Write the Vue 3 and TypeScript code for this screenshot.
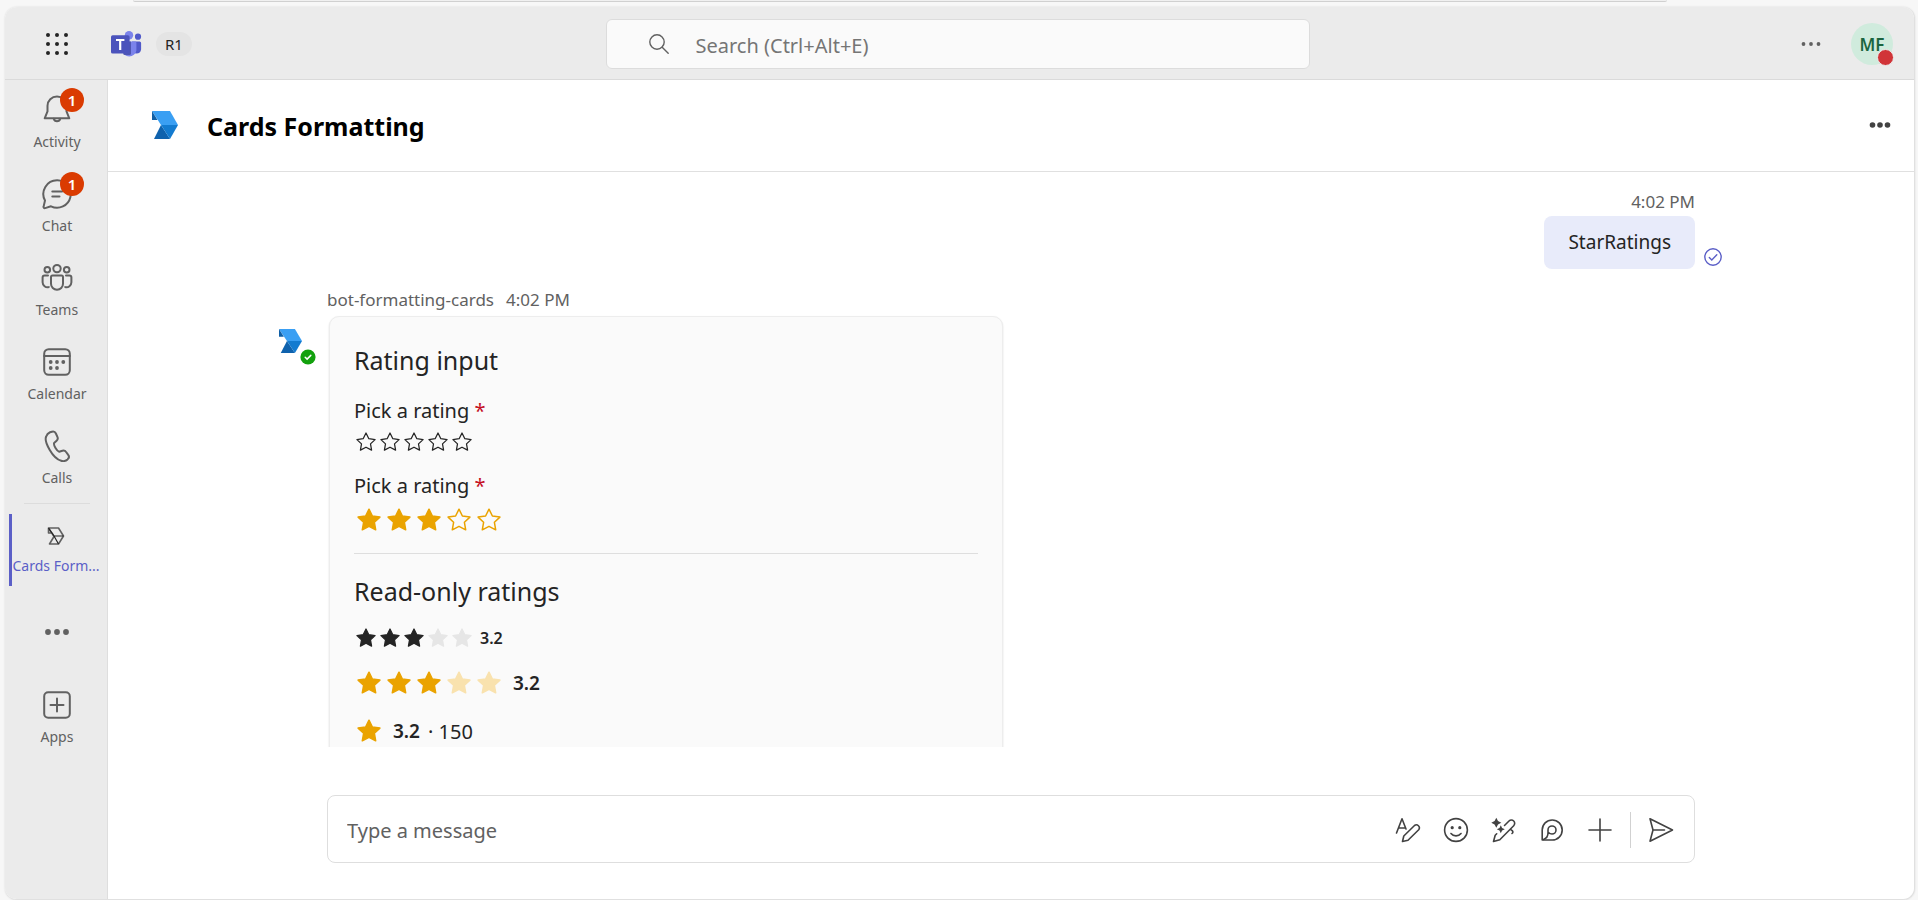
<script setup lang="ts">
import { ref } from 'vue'

interface NavItem {
  label: string
  icon: 'bell' | 'chat' | 'people' | 'calendar' | 'phone'
  badge?: number
}

const navItems: NavItem[] = [
  { label: 'Activity', icon: 'bell', badge: 1 },
  { label: 'Chat', icon: 'chat', badge: 1 },
  { label: 'Teams', icon: 'people' },
  { label: 'Calendar', icon: 'calendar' },
  { label: 'Calls', icon: 'phone' },
]

const starPath =
  'M12 1.2 15.4 8 22.9 9.1 17.4 14.300 18.700 21.800 12 18.300 5.300 21.800 6.600 14.300 1.100 9.100 8.600 8Z'

const gridSteps = [3, 12, 21]
const search = ref('')
const draft = ref('')
const firstRating = ref(0)
const secondRating = ref(3)
</script>

<template>
  <div class="page">
    <div class="upper-edge"></div>
    <div class="window">
      <header class="topbar">
        <div class="topbar-left">
          <button class="plain launcher" aria-label="App launcher">
            <svg width="24" height="24" viewBox="0 0 24 24" fill="#242424">
              <template v-for="y in gridSteps" :key="y">
                <circle v-for="x in gridSteps" :key="x" :cx="x" :cy="y" r="2" />
              </template>
            </svg>
          </button>
          <svg class="teams-logo" width="31" height="27" viewBox="0 0 31 27">
            <circle cx="27" cy="5.7" r="3.1" fill="#5059c9" />
            <path d="M21 10.4h7.6a1.5 1.5 0 0 1 1.5 1.5v6.6a4.6 4.6 0 0 1-9.1 0Z" fill="#5059c9" />
            <circle cx="18" cy="4.3" r="4.2" fill="#7b83eb" />
            <path d="M11 10.4h13a1.4 1.4 0 0 1 1.4 1.4v7.6a7.3 7.3 0 0 1-14.4 0Z" fill="#7b83eb" />
            <path d="M11 10.4h9v12a1.6 1.6 0 0 1-1.6 1.6H12.6Z" fill="#3f479f" opacity=".75" />
            <rect y="4.3" width="18.6" height="18.3" rx="1.7" fill="#4b53bc" />
            <path d="M5 9h8.400M9.200 9v10" fill="none" stroke="#fff" stroke-width="2.200" />
          </svg>
          <span class="ring">R1</span>
        </div>
        <label class="search">
          <svg width="22" height="22" viewBox="0 0 22 22" fill="none" stroke="#616161" stroke-width="1.4" stroke-linecap="round">
            <circle cx="9" cy="9" r="7.2" />
            <path d="m14.200 14.200 6 6" />
          </svg>
          <input v-model="search" type="text" placeholder="Search (Ctrl+Alt+E)" aria-label="Search" />
        </label>
        <div class="topbar-right">
          <button class="plain" aria-label="Settings and more">
            <svg width="20" height="20" viewBox="0 0 20 20" fill="#616161">
              <circle cx="2.500" cy="10" r="1.900" />
              <circle cx="10" cy="10" r="1.900" />
              <circle cx="17.500" cy="10" r="1.900" />
            </svg>
          </button>
          <button class="plain avatar" aria-label="Profile, MF, busy">MF<span class="busy"></span></button>
        </div>
      </header>

      <div class="body">
        <nav class="rail">
          <button v-for="item in navItems" :key="item.label" class="plain rail-item">
            <span class="rail-icon">
              <svg v-if="item.icon === 'bell'" width="32" height="32" viewBox="0 0 32 32" class="line">
                <path d="M16 2.500c-5.300 0-9.500 4.100-9.500 9.300v5.600L3.700 24.300h24.600l-2.800-6.900v-5.600c0-5.200-4.200-9.300-9.500-9.300Z" />
                <path d="M12.800 24.800a3.300 3.300 0 0 0 6.400 0" />
              </svg>
              <svg v-else-if="item.icon === 'chat'" width="32" height="32" viewBox="0 0 32 32" class="line">
                <path d="M16.200 2.300a13.700 13.700 0 1 1-6.200 26l-5.900 1.800c-1 .3-1.800-.6-1.500-1.500L4 22.500a13.700 13.700 0 0 1 12.200-20.200Z" />
                <path d="M11.300 13.500h9.800M11.300 18.600h7.200" />
              </svg>
              <svg v-else-if="item.icon === 'people'" width="32" height="32" viewBox="0 0 32 32" class="line">
                <circle cx="16" cy="6.600" r="3.700" />
                <circle cx="6.300" cy="7.800" r="2.800" />
                <circle cx="25.700" cy="7.800" r="2.800" />
                <path d="M11.500 13.500h9a1.500 1.500 0 0 1 1.500 1.500v6.800a6 6 0 0 1-12 0V15a1.500 1.500 0 0 1 1.500-1.500Z" />
                <path d="M7 13.500H3.600a2 2 0 0 0-2 2v4.800a5 5 0 0 0 6.200 4.800M25 13.500h3.400a2 2 0 0 1 2 2v4.800a5 5 0 0 1-6.200 4.800" />
              </svg>
              <svg v-else-if="item.icon === 'calendar'" width="32" height="32" viewBox="0 0 32 32" class="line">
                <rect x="3.200" y="3.200" width="25.600" height="25.600" rx="4.500" />
                <path d="M3.200 10h25.600" />
                <g fill="#616161" stroke="none">
                  <circle cx="9.700" cy="16" r="1.900" />
                  <circle cx="16" cy="16" r="1.900" />
                  <circle cx="22.300" cy="16" r="1.900" />
                  <circle cx="9.700" cy="22" r="1.900" />
                  <circle cx="16" cy="22" r="1.900" />
                </g>
              </svg>
              <svg v-else width="32" height="32" viewBox="0 0 32 32" class="line">
                <path d="m9 2.300 1.900-.6c1.600-.5 3.300.3 4 1.800l1.500 3.400c.6 1.300.3 2.900-.8 3.900l-2.500 2.300c-.4 1 .2 2.900 1.400 5 1.300 2.200 2.700 3.500 3.600 3.600l3.300-1c1.400-.4 2.900.1 3.700 1.300l2.100 2.900c1 1.300.8 3.100-.4 4.200l-.3.300a6.500 6.500 0 0 1-6.300 1.400c-4.300-1.300-8.200-5.200-11.600-11.100C5.200 13.900 4 8.900 5.200 6.500A6.500 6.500 0 0 1 9 2.300Z" />
              </svg>
              <span v-if="item.badge" class="badge">{{ item.badge }}</span>
            </span>
            <span class="rail-label">{{ item.label }}</span>
          </button>
          <div class="rail-divider"></div>
          <button class="plain rail-item active" aria-current="page">
            <span class="rail-icon">
              <svg width="18" height="20" viewBox="0 0 18 20" fill="none" stroke-linejoin="round">
                <path d="M1.500 2h10l5 8-5 8h-9L7 10.500 5 7H1.500ZM1.500 2l5.500 8.500" stroke="#616161" stroke-width="1.600" />
                <path d="M1.500 2 7 10h9.500M7 10l4.500 8" stroke="#242424" stroke-width="1.200" />
              </svg>
            </span>
            <span class="rail-label">Cards Form...</span>
          </button>
          <button class="plain rail-more" aria-label="More apps">
            <svg width="24" height="8" viewBox="0 0 24 8" fill="#616161">
              <circle cx="3" cy="4" r="2.900" />
              <circle cx="12" cy="4" r="2.900" />
              <circle cx="21" cy="4" r="2.900" />
            </svg>
          </button>
          <button class="plain rail-item">
            <span class="rail-icon">
              <svg width="32" height="32" viewBox="0 0 32 32" class="line">
                <rect x="3.200" y="3.200" width="25.600" height="25.600" rx="4" />
                <path d="M16 9.500v13M9.500 16h13" />
              </svg>
            </span>
            <span class="rail-label">Apps</span>
          </button>
        </nav>

        <main class="main">
          <div class="chat-header">
            <svg class="bot-logo" width="26" height="28" viewBox="0 0 26 28">
              <path d="M0 0h18l8 14H9Z" fill="#3a9ff3" />
              <path d="M0 0 5.500 9H0Z" fill="#0f5fa6" />
              <path d="M9 14 2 28h16Z" fill="#0f62ad" />
              <path d="M9 14h17l-8 14Z" fill="#137bd0" />
            </svg>
            <h1>Cards Formatting</h1>
            <button class="plain header-more" aria-label="More options">
              <svg width="22" height="8" viewBox="0 0 22 8" fill="#424242">
                <circle cx="3.500" cy="4" r="2.800" />
                <circle cx="11" cy="4" r="2.800" />
                <circle cx="18.500" cy="4" r="2.800" />
              </svg>
            </button>
          </div>

          <section class="messages" aria-label="Messages">
            <div class="column">
              <div class="sent-time">4:02 PM</div>
              <div class="sent-row">
                <div class="bubble">StarRatings</div>
                <svg width="18" height="18" viewBox="0 0 18 18" fill="none" stroke="#5b5fc7" stroke-width="1.400">
                  <circle cx="9" cy="9" r="8.200" />
                  <path d="m5.300 9.400 2.500 2.500 5-5.200" stroke-linecap="round" />
                </svg>
              </div>

              <article class="bot-message">
                <div class="bot-meta"><span>bot-formatting-cards</span><span>4:02 PM</span></div>
                <div class="bot-avatar">
                  <svg width="23" height="24" viewBox="0 0 26 28" preserveAspectRatio="none">
                    <path d="M0 0h18l8 14H9Z" fill="#3a9ff3" />
                    <path d="M0 0 5.500 9H0Z" fill="#0f5fa6" />
                    <path d="M9 14 2 28h16Z" fill="#0f62ad" />
                    <path d="M9 14h17l-8 14Z" fill="#137bd0" />
                  </svg>
                  <svg class="presence" width="16" height="16" viewBox="0 0 16 16">
                    <circle cx="8" cy="8" r="7.600" fill="#13a10e" />
                    <path d="m5.200 8.300 1.900 1.800 3.700-3.700" fill="none" stroke="#fff" stroke-width="1.500" stroke-linecap="round" />
                  </svg>
                </div>
                <div class="card">
                  <h2>Rating input</h2>
                  <fieldset>
                    <legend>Pick a rating <span class="required">*</span></legend>
                    <div class="stars small dark">
                      <label v-for="n in 5" :key="n" :class="{ on: n <= firstRating }">
                        <input v-model="firstRating" type="radio" name="rating-one" :value="n" :aria-label="`${n} stars`" />
                        <svg viewBox="0 0 24 24"><path :d="starPath" /></svg>
                      </label>
                    </div>
                  </fieldset>
                  <fieldset>
                    <legend>Pick a rating <span class="required">*</span></legend>
                    <div class="stars large gold">
                      <label v-for="n in 5" :key="n" :class="{ on: n <= secondRating }">
                        <input v-model="secondRating" type="radio" name="rating-two" :value="n" :aria-label="`${n} stars`" />
                        <svg viewBox="0 0 24 24"><path :d="starPath" /></svg>
                      </label>
                    </div>
                  </fieldset>
                  <hr />
                  <h2>Read-only ratings</h2>
                  <div class="stars readonly small dark">
                    <span v-for="n in 5" :key="n" class="star" :class="n <= 3 ? 'on' : 'dim'">
                      <svg viewBox="0 0 24 24"><path :d="starPath" /></svg>
                    </span>
                    <strong>3.2</strong>
                  </div>
                  <div class="stars readonly large gold">
                    <span v-for="n in 5" :key="n" class="star" :class="n <= 3 ? 'on' : 'dim'">
                      <svg viewBox="0 0 24 24"><path :d="starPath" /></svg>
                    </span>
                    <strong>3.2</strong>
                  </div>
                  <div class="stars readonly large gold">
                    <span class="star on"><svg viewBox="0 0 24 24"><path :d="starPath" /></svg></span>
                    <strong>3.2</strong><span class="count">· 150</span>
                  </div>
                </div>
              </article>
            </div>
          </section>

          <form class="composer" @submit.prevent>
            <input v-model="draft" type="text" placeholder="Type a message" aria-label="Type a message" />
            <button type="button" class="plain tool" aria-label="Format">
              <svg width="26" height="26" viewBox="0 0 26 26" class="thin">
                <path d="M1.500 16 7 1.800l4 10.200M3.500 11h6.300" />
                <path d="M7.500 24.500 8.800 19 19.500 8.500a3 3 0 0 1 4.200 4.200L13 23.300Z" />
              </svg>
            </button>
            <button type="button" class="plain tool" aria-label="Emoji">
              <svg width="26" height="26" viewBox="0 0 26 26" class="thin">
                <circle cx="13" cy="13" r="11.400" />
                <path d="M8 16.500c2.500 3.200 7.500 3.200 10 0" />
                <circle cx="9.200" cy="10.700" r="1.600" class="solid" />
                <circle cx="16.800" cy="10.700" r="1.600" class="solid" />
              </svg>
            </button>
            <button type="button" class="plain tool" aria-label="Rewrite">
              <svg width="26" height="26" viewBox="0 0 26 26" class="thin">
                <path d="M5.300.8 7 4.100 10.300 5.800 7 7.500 5.300 10.800 3.600 7.500.3 5.800 3.600 4.100ZM9.800 8.300l1.300 2.700 2.700 1.300-2.700 1.300-1.300 2.700-1.300-2.700-2.700-1.300 2.700-1.300Z" class="solid" />
                <path d="m13.500 8.500 4.500-4.500a3.300 3.300 0 0 1 4.700 4.700L8.800 22.700 2.500 24.500l1.700-6.200 1.500-1.500M19.500 12.300l1.700 1.300c1 1 .9 2-.2 2.900" />
              </svg>
            </button>
            <button type="button" class="plain tool" aria-label="Loop">
              <svg width="26" height="26" viewBox="0 0 26 26" class="thin">
                <path d="M3.200 23V13A10 10 0 1 1 13.200 23Z" />
                <path d="M4.500 22.500c2.800-1 4.500-3.300 4.500-6.500v-3a4 4 0 1 1 4 4c-1.500 0-2.500-.5-3.500-1.500" />
              </svg>
            </button>
            <button type="button" class="plain tool" aria-label="More actions">
              <svg width="26" height="26" viewBox="0 0 26 26" class="thin"><path d="M13 2v22M2 13h22" /></svg>
            </button>
            <span class="tool-divider"></span>
            <button type="submit" class="plain send" aria-label="Send">
              <svg width="26" height="26" viewBox="0 0 26 26" class="thin">
                <path d="M2 1.800 24.500 13 2 24.200 5 13ZM5 13h11.500" />
              </svg>
            </button>
          </form>
        </main>
      </div>
    </div>
  </div>
</template>

<style>
body {
  background: #f7f7f7;
}
</style>

<style scoped>
.page {
  display: flex;
  flex-direction: column;
  box-sizing: border-box;
  height: 100vh;
  padding: 0 3px 0 5px;
  overflow: hidden;
  background: #f7f7f7;
  color: #242424;
  font-family: 'Segoe UI', 'Noto Sans', 'Open Sans', sans-serif;
}
.upper-edge {
  box-sizing: border-box;
  height: 2px;
  margin: 0 248px 5px 128px;
  border-bottom: 1px solid #d0d0d0;
  border-radius: 0 0 8px 8px;
  background: #f0f0f0;
}
.window {
  display: flex;
  flex: 1;
  flex-direction: column;
  box-sizing: border-box;
  min-height: 0;
  border: solid #e0e0e0;
  border-width: 0 1px 1px 0;
  border-radius: 12px;
  overflow: hidden;
  background: #fff;
  box-shadow: 0 0 2px #d6d6d6;
}
.plain {
  display: flex;
  align-items: center;
  justify-content: center;
  padding: 0;
  border: 0;
  background: none;
  color: inherit;
  font: inherit;
  cursor: pointer;
}
input {
  font-family: inherit;
}
.topbar {
  display: grid;
  grid-template-columns: 1fr 704px 1fr;
  align-items: center;
  flex: none;
  height: 73px;
  box-sizing: border-box;
  padding: 2px 4px 0 0;
  border-bottom: 1px solid #dadada;
  background: #ebebeb;
}
.topbar-left,
.topbar-right {
  display: flex;
  align-items: center;
}
.launcher {
  margin-left: 40px;
}
.teams-logo {
  margin-left: 42px;
}
.ring {
  margin-left: 14px;
  padding: 0 9px;
  border-radius: 12px;
  background: #e4e4e4;
  font-size: 15px;
  line-height: 24px;
}
.search {
  display: flex;
  align-items: center;
  gap: 26px;
  box-sizing: border-box;
  height: 50px;
  padding: 0 41px;
  border: 1px solid #dcdcdc;
  border-radius: 6px;
  background: #fafafa;
}
.search input {
  flex: 1;
  padding: 2px 0 0;
  border: 0;
  outline: 0;
  background: none;
  font-size: 20px;
}
.search input::placeholder {
  color: #757575;
}
.topbar-right {
  justify-content: flex-end;
  gap: 30px;
  padding-right: 17px;
}
.avatar {
  position: relative;
  width: 42px;
  height: 42px;
  border-radius: 50%;
  background: #d0ebdd;
  color: #1b6540;
  font-size: 17px;
  font-weight: 600;
}
.busy {
  position: absolute;
  right: -1px;
  bottom: -1px;
  width: 15px;
  height: 15px;
  border: 1px solid #ebebeb;
  border-radius: 50%;
  background: #d13438;
}
.body {
  display: flex;
  flex: 1;
  min-height: 0;
}
.rail {
  flex: none;
  box-sizing: border-box;
  width: 103px;
  padding-left: 2px;
  border-right: 1px solid #dedede;
  background: #ebebeb;
  color: #616161;
}
.rail-item {
  flex-direction: column;
  justify-content: flex-start;
  gap: 6px;
  box-sizing: border-box;
  width: 100%;
  height: 84px;
  padding-top: 14px;
}
.rail-icon {
  position: relative;
  display: flex;
  align-items: center;
  justify-content: center;
  width: 32px;
  height: 32px;
}
.line {
  fill: none;
  stroke: #616161;
  stroke-width: 2;
  stroke-linecap: round;
  stroke-linejoin: round;
}
.rail-label {
  font-size: 14px;
  line-height: 20px;
  white-space: nowrap;
}
.badge {
  position: absolute;
  top: -6px;
  left: 19px;
  width: 24px;
  height: 24px;
  border-radius: 50%;
  background: #da3b01;
  color: #fff;
  font-size: 15px;
  font-weight: 600;
  line-height: 24px;
  text-align: center;
}
.rail-divider {
  height: 1px;
  margin: 3px 17px 10px;
  background: #dcdcdc;
}
.active {
  gap: 4px;
  height: 72px;
  padding: 6px 2px 0 0;
  background: linear-gradient(#5b5fc7, #5b5fc7) 2px 0 / 3px 100% no-repeat;
  color: #5b5fc7;
}
.rail-more {
  width: 100%;
  height: 82px;
  margin: 5px 0 2px;
}
.main {
  display: flex;
  flex: 1;
  flex-direction: column;
  min-width: 0;
}
.chat-header {
  display: flex;
  align-items: center;
  flex: none;
  box-sizing: border-box;
  height: 92px;
  padding: 0 23px 2px 44px;
  border-bottom: 1px solid #e0e0e0;
}
.bot-logo {
  margin-right: 29px;
}
h1 {
  margin: 0;
  padding-top: 2px;
  color: #000;
  font-size: 25px;
  font-weight: 700;
}
.header-more {
  margin-left: auto;
}
.messages {
  flex: 1;
  min-height: 0;
  padding: 18px 80px 0;
  overflow: hidden;
}
.column,
.composer {
  max-width: 1368px;
  margin: 0 auto;
}
.sent-time {
  color: #616161;
  font-size: 17px;
  line-height: 24px;
  text-align: right;
}
.sent-row {
  display: flex;
  align-items: flex-end;
  justify-content: flex-end;
  gap: 9px;
  margin: 2px -27px 19px 0;
}
.sent-row svg {
  margin-bottom: 3px;
}
.bubble {
  padding: 12px 24px;
  border-radius: 8px;
  background: #e8ebfa;
  font-size: 19px;
  line-height: 29px;
}
.bot-message {
  display: grid;
  grid-template-columns: 50px minmax(0, 674px);
  margin-left: -48px;
}
.bot-meta {
  display: flex;
  grid-column: 1 / -1;
  gap: 12px;
  margin: 0 0 4px 48px;
  color: #616161;
  font-size: 17px;
  line-height: 24px;
}
.bot-avatar {
  position: relative;
  width: 37px;
  height: 49px;
  padding-top: 13px;
  box-sizing: border-box;
}
.bot-avatar svg {
  display: block;
}
.bot-avatar .presence {
  position: absolute;
  right: 0;
  bottom: 0;
}
.card {
  box-sizing: border-box;
  padding: 24px;
  border: 1px solid #ededed;
  border-radius: 10px;
  background: #fafafa;
  box-shadow: 0 1px 2px rgba(0, 0, 0, 0.14);
  font-size: 20px;
}
h2 {
  margin: 0;
  font-size: 25px;
  font-weight: 400;
  line-height: 38px;
}
fieldset {
  min-width: 0;
  margin: 18px 0 0;
  padding: 0;
  border: 0;
}
legend {
  padding: 0;
  line-height: 28px;
}
.required {
  color: #c50f1f;
}
.stars {
  display: flex;
  align-items: center;
}
fieldset .stars {
  margin-top: 5px;
}
.stars label,
.star {
  display: flex;
  align-items: center;
  justify-content: center;
  position: relative;
}
.stars label input {
  position: absolute;
  inset: 0;
  margin: 0;
  opacity: 0;
  cursor: pointer;
}
.stars svg {
  fill: none;
  stroke-width: 1.5;
  stroke-linejoin: round;
}
.small label,
.small .star {
  width: 24px;
  height: 24px;
}
.small svg {
  width: 20px;
  height: 20px;
}
.large label,
.large .star {
  width: 30px;
  height: 30px;
}
.large svg {
  width: 24px;
  height: 24px;
}
.dark svg {
  stroke: #242424;
}
.gold svg {
  stroke: #eaa300;
}
.dark .on svg {
  fill: #242424;
}
.gold .on svg {
  fill: #eaa300;
}
.dark .dim svg {
  fill: #e6e6e6;
  stroke: #e6e6e6;
}
.gold .dim svg {
  fill: #f9e2ae;
  stroke: #f9e2ae;
}
hr {
  height: 1px;
  margin: 18px 0;
  border: 0;
  background: #dedede;
}
.readonly {
  margin-top: 18px;
}
.readonly.small {
  margin-top: 16px;
}
.readonly strong {
  margin-left: 9px;
  font-size: 19px;
  font-weight: 600;
}
.readonly.small strong {
  margin-left: 6px;
  font-size: 16px;
}
.count {
  margin-left: 8px;
}
.composer {
  display: flex;
  align-items: center;
  flex: none;
  box-sizing: border-box;
  width: calc(100% - 160px);
  height: 68px;
  margin: 48px auto 36px;
  padding: 2px 20px 0 19px;
  border: 1px solid #dedede;
  border-radius: 8px;
}
.composer input {
  flex: 1;
  min-width: 0;
  padding: 0;
  border: 0;
  outline: 0;
  background: none;
  font-size: 20px;
}
.composer input::placeholder {
  color: #616161;
}
.tool {
  width: 48px;
  height: 48px;
}
.thin {
  fill: none;
  stroke: #424242;
  stroke-width: 1.6;
  stroke-linecap: round;
  stroke-linejoin: round;
}
.thin .solid {
  fill: #424242;
  stroke: none;
}
.tool-divider {
  width: 1px;
  height: 36px;
  margin: 0 17px 0 6px;
  background: #d1d1d1;
}
</style>
